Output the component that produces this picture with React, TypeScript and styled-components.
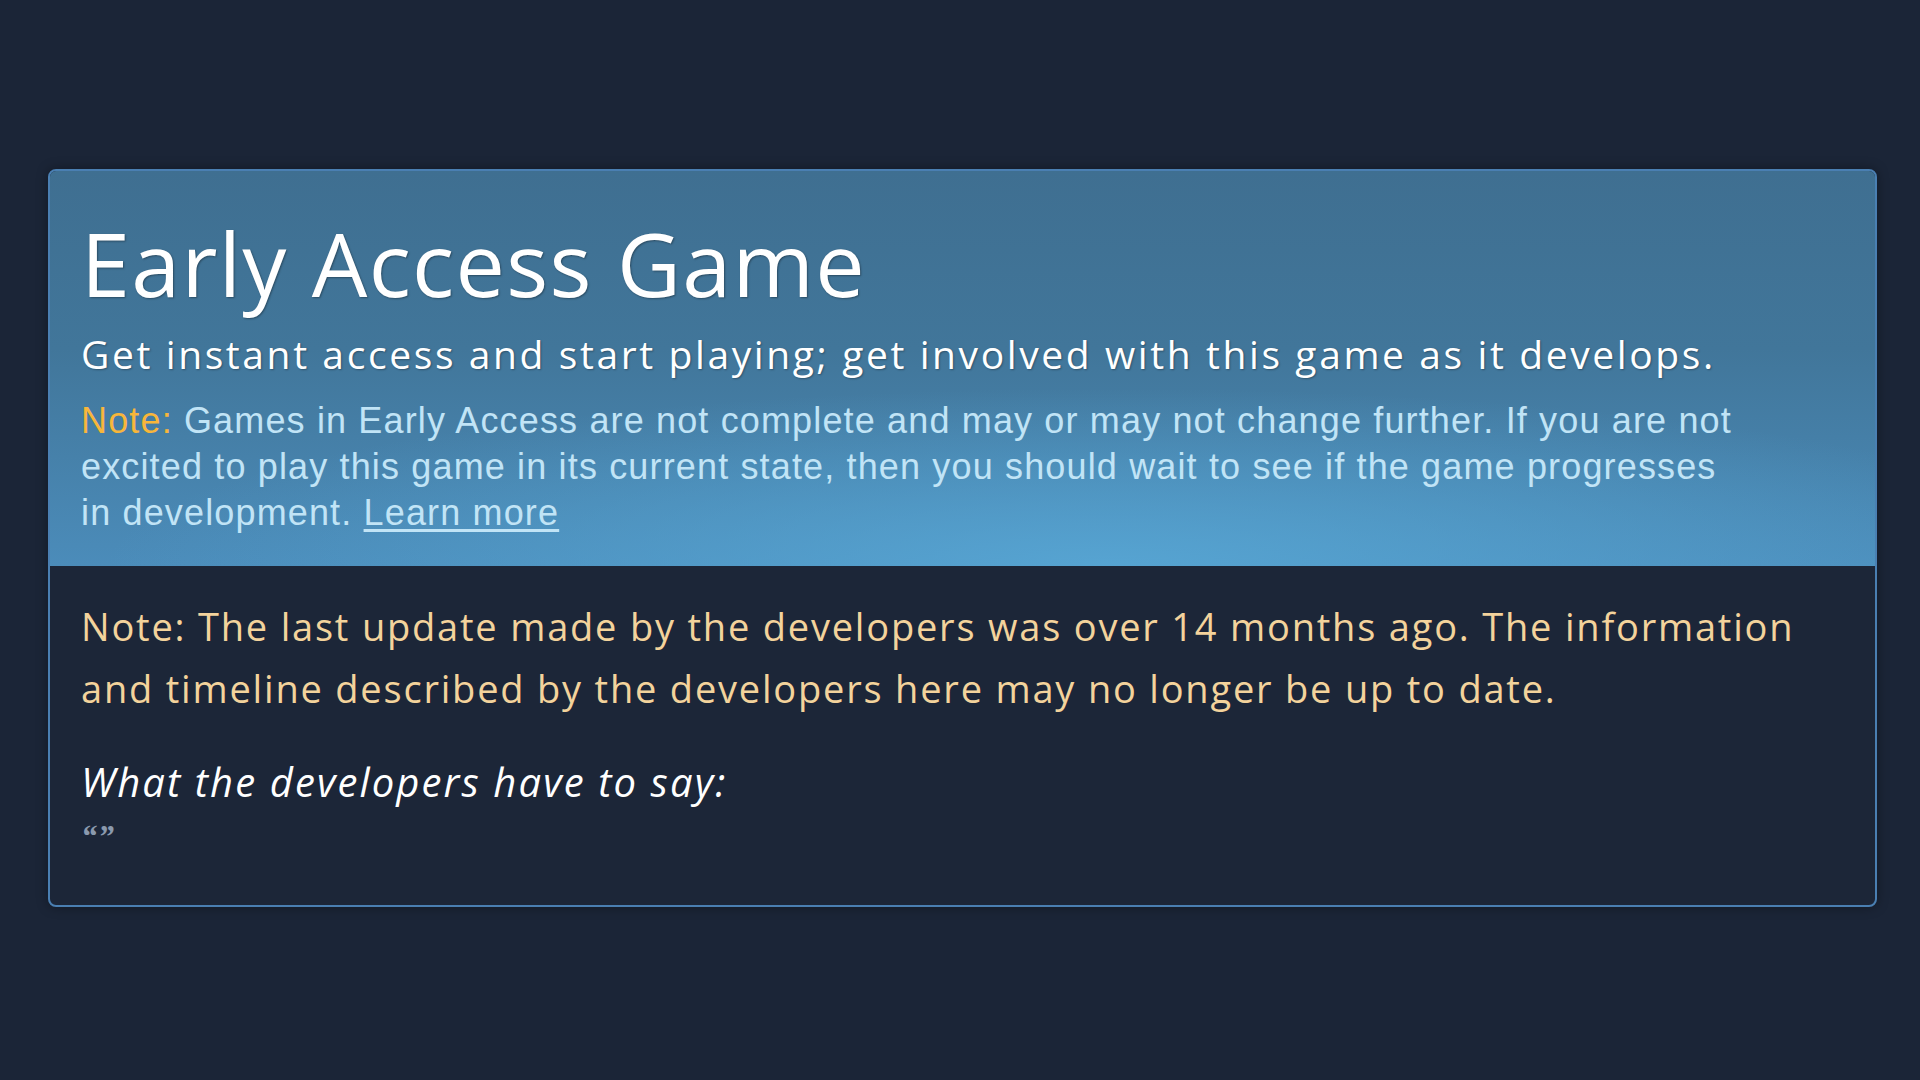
import React from 'react';
import styled, { createGlobalStyle } from 'styled-components';

const GlobalStyle = createGlobalStyle`
  html, body {
    margin: 0;
    padding: 0;
    background: #1b2537;
  }
`;

const Page = styled.div`
  width: 1920px;
  height: 1080px;
  box-sizing: border-box;
  padding: 169px 0 0 48px;
  background: #1b2537;
  font-family: 'Open Sans', 'Noto Sans', sans-serif;
`;

const Card = styled.section`
  width: 1829px;
  height: 738px;
  box-sizing: border-box;
  border: 2px solid #4a7fb2;
  border-radius: 8px;
  overflow: hidden;
  background: #1c2638;
  box-shadow: 0 0 12px rgba(0, 0, 0, 0.35);
  display: flex;
  flex-direction: column;
`;

const Header = styled.header`
  height: 395px;
  box-sizing: border-box;
  padding: 40px 31px 0;
  background:
    radial-gradient(ellipse 55% 45% at 58% 100%, rgba(88, 168, 214, 0.85) 0%, rgba(88, 168, 214, 0) 100%),
    linear-gradient(to bottom, #3f6f91 0%, #41769a 45%, #4b8cba 100%);
`;

const Title = styled.h1`
  margin: 0;
  font-size: 88px;
  font-weight: 400;
  line-height: 1.2;
  letter-spacing: 1.3px;
  color: #ffffff;
  text-shadow: 1px 1px 2px rgba(0, 0, 0, 0.35);
`;

const Subtitle = styled.p`
  margin: 12px 0 0;
  font-size: 39px;
  line-height: 1.3;
  letter-spacing: 2.6px;
  color: #ffffff;
  text-shadow: 1px 1px 2px rgba(0, 0, 0, 0.3);
`;

const Disclaimer = styled.p`
  margin: 19px 0 0;
  font-family: 'Liberation Sans', Arial, sans-serif;
  font-size: 36px;
  line-height: 46px;
  letter-spacing: 1.15px;
  color: #c1e4f6;
`;

const NoteLabel = styled.span`
  color: #f8b63a;
`;

const LearnMore = styled.a`
  color: #c1e4f6;
  text-decoration: underline;
  text-underline-offset: 4px;
`;

const Body = styled.div`
  flex: 1;
  padding: 29px 31px 0;
`;

const StaleNote = styled.p`
  margin: 0;
  font-size: 38px;
  line-height: 62px;
  letter-spacing: 1.8px;
  color: #f3d39c;
`;

const DevHeading = styled.p`
  margin: 37px 0 0;
  font-size: 40px;
  font-style: italic;
  line-height: 1.3;
  letter-spacing: 2.1px;
  color: #ffffff;
`;

const Quote = styled.p`
  margin: 12px 0 0;
  font-family: 'Liberation Serif', serif;
  font-size: 32px;
  font-style: italic;
  font-weight: 700;
  line-height: 1;
  letter-spacing: 1px;
  color: #8a99ad;
`;

export default function App() {
  return (
    <Page>
      <GlobalStyle />
      <Card>
        <Header>
          <Title>Early Access Game</Title>
          <Subtitle>Get instant access and start playing; get involved with this game as it develops.</Subtitle>
          <Disclaimer>
            <NoteLabel>Note:</NoteLabel> Games in Early Access are not complete and may or may not change further. If you are not
            <br />
            excited to play this game in its current state, then you should wait to see if the game progresses
            <br />
            in development. <LearnMore href="#">Learn more</LearnMore>
          </Disclaimer>
        </Header>
        <Body>
          <StaleNote>
            Note: The last update made by the developers was over 14 months ago. The information
            <br />
            and timeline described by the developers here may no longer be up to date.
          </StaleNote>
          <DevHeading>What the developers have to say:</DevHeading>
          <Quote>“”</Quote>
        </Body>
      </Card>
    </Page>
  );
}
